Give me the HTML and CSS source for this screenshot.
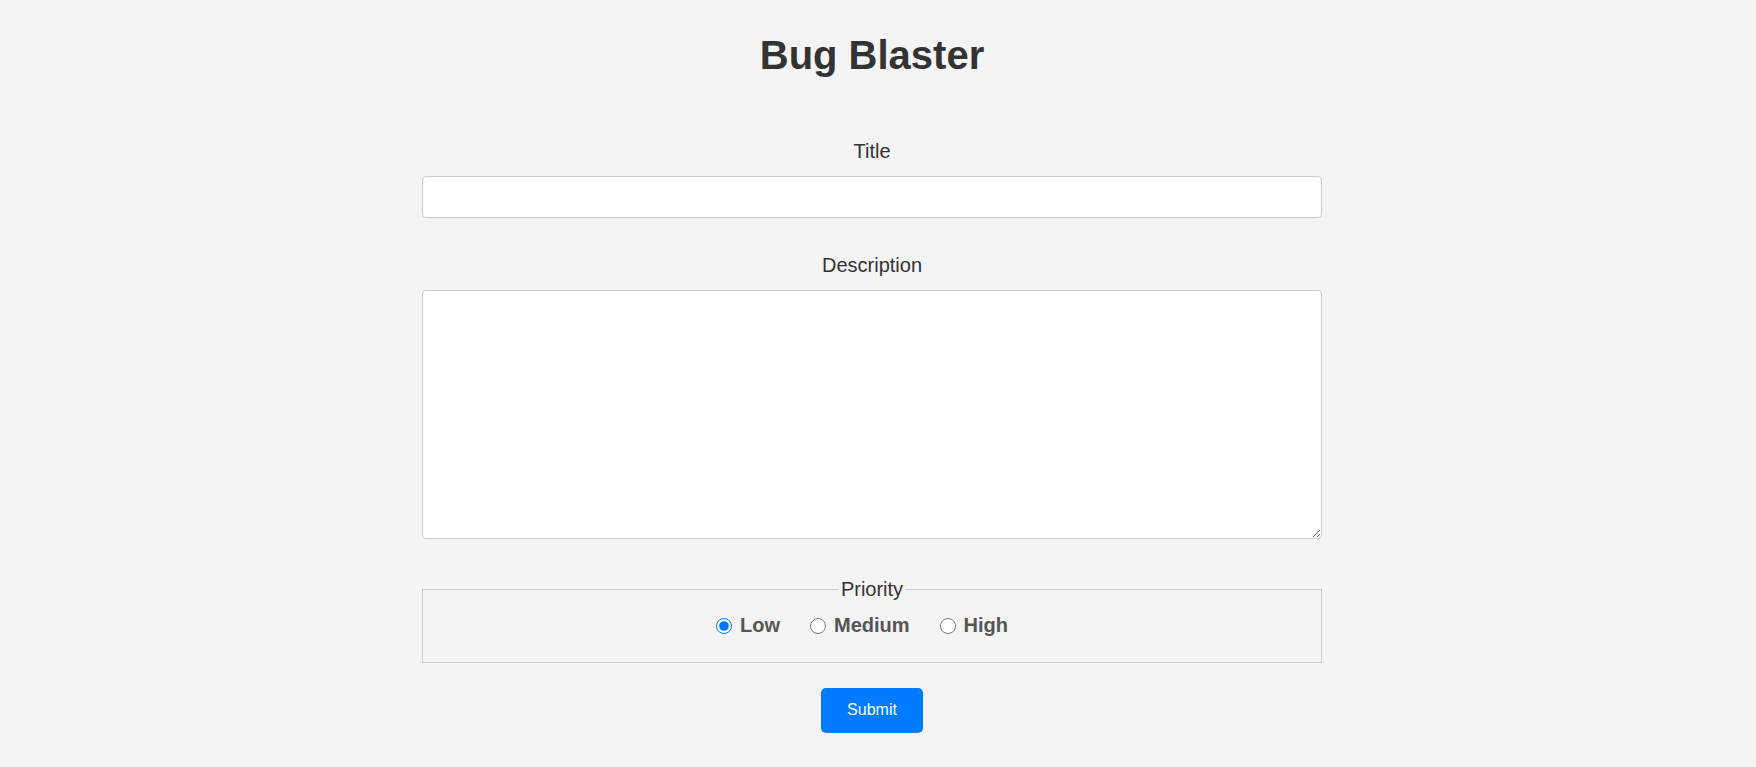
FILE: index.html
```html
<!DOCTYPE html>
<html lang="en">
<head>
<meta charset="utf-8">
<title>Bug Blaster</title>
<link rel="stylesheet" href="styles.css">
</head>
<body>
<div class="app">
  <h1 class="app-title">Bug Blaster</h1>
  <form class="ticket-form">
    <label class="field-label" for="title">Title</label>
    <input class="text-input" id="title" type="text">
    <label class="field-label" for="description">Description</label>
    <textarea class="text-area" id="description"></textarea>
    <fieldset class="priority">
      <legend class="priority-legend">Priority</legend>
      <div class="priority-options">
        <label class="option"><input class="radio" type="radio" name="priority" value="low" checked>Low</label>
        <label class="option"><input class="radio" type="radio" name="priority" value="medium">Medium</label>
        <label class="option"><input class="radio" type="radio" name="priority" value="high">High</label>
      </div>
    </fieldset>
    <button class="submit-btn" type="submit">Submit</button>
  </form>
</div>
</body>
</html>
```
FILE: styles.css
```css
html, body {
  margin: 0;
}

body {
  padding: 0 12px 0 0;
  background: #f4f4f4;
  font-family: "Liberation Sans", Arial, sans-serif;
  color: #333;
}

.app {
  width: 900px;
  margin: 0 auto;
}

.app-title {
  font-size: 40px;
  line-height: 46px;
  font-weight: bold;
  text-align: center;
  margin: 32px 0 62px;
  color: #333;
}

.ticket-form {
  display: block;
}

.field-label {
  display: block;
  text-align: center;
  font-size: 20px;
  line-height: 23px;
  margin-bottom: 13px;
  color: #333;
}

.text-input {
  display: block;
  box-sizing: border-box;
  width: 100%;
  height: 42px;
  margin: 0 0 36px;
  padding: 8px 10px;
  border: 1px solid #ccc;
  border-radius: 4px;
  background: #fff;
  font-family: "Liberation Sans", Arial, sans-serif;
  font-size: 16px;
}

.text-area {
  display: block;
  box-sizing: border-box;
  width: 100%;
  height: 249px;
  margin: 0 0 39px;
  padding: 8px 10px;
  border: 1px solid #ccc;
  border-radius: 4px;
  background: #fff;
  font-family: "Liberation Sans", Arial, sans-serif;
  font-size: 16px;
}

.priority {
  box-sizing: border-box;
  width: 100%;
  min-width: 0;
  margin: 0;
  padding: 13px 10px 25px;
  border: 1px solid #ccc;
}

.priority-legend {
  margin: 0 auto;
  padding: 0 2px;
  font-size: 20px;
  line-height: 23px;
  color: #333;
}

.priority-options {
  display: flex;
  justify-content: center;
  align-items: center;
}

.option {
  display: inline-flex;
  align-items: center;
  margin: 0 25px 0 5px;
  font-size: 20px;
  line-height: 23px;
  font-weight: bold;
  color: #555;
}

.radio {
  width: 16px;
  height: 16px;
  margin: 0 8px 0 0;
}

.submit-btn {
  display: block;
  width: 102px;
  height: 45px;
  margin: 25px auto 0;
  padding: 0 0 2px;
  border: none;
  border-radius: 5px;
  background: #007bff;
  color: #fff;
  font-family: "Liberation Sans", Arial, sans-serif;
  font-size: 16px;
  cursor: pointer;
}
```
